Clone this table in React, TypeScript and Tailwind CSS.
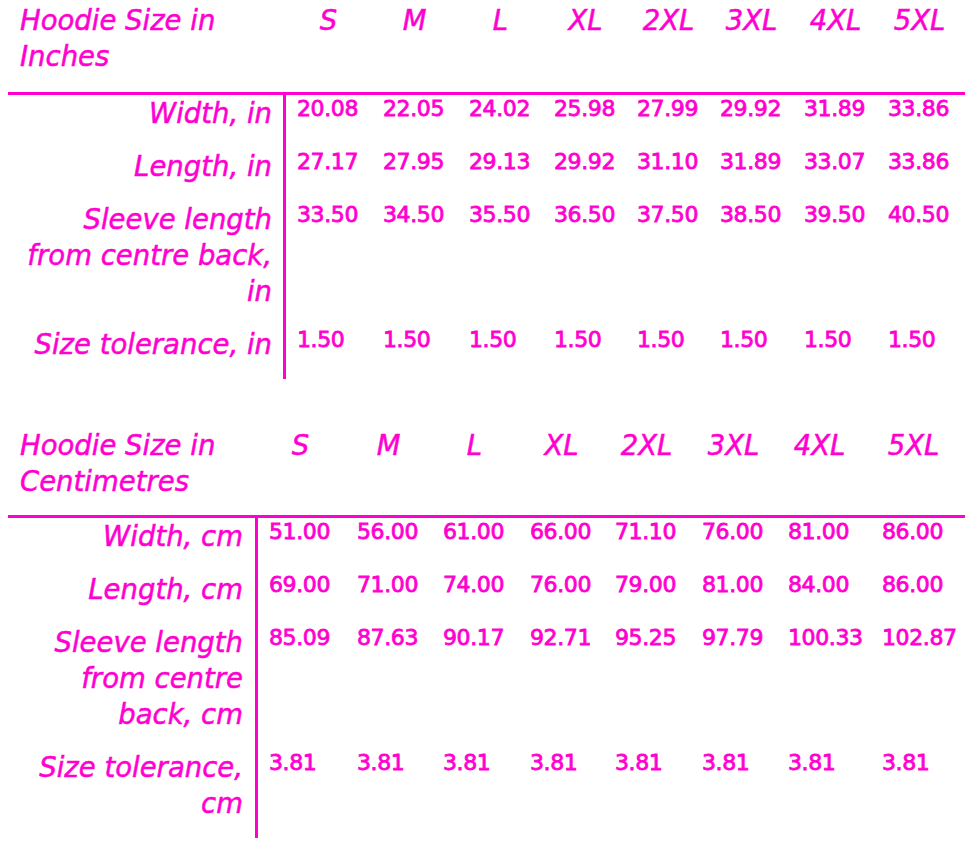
import React from "react";

type Row = { label: string[]; values: string[] };

const SIZES = ["S", "M", "L", "XL", "2XL", "3XL", "4XL", "5XL"];

function SizeTable({
  gridClass,
  labelPad,
  title,
  rows,
  headerPb,
}: {
  gridClass: string;
  labelPad: string;
  title: string[];
  rows: Row[];
  headerPb: string;
}) {
  return (
    <div className="ml-[8px] w-[957px]">
      <div className={`grid ${gridClass} border-b-[3px] border-[#ff00d0]`}>
        <div className={`pl-[12px] pt-[2px] ${headerPb} italic text-[27.5px] leading-[36px] [-webkit-text-stroke:0.5px_#ff00d0]`}>
          {title.map((t, i) => (
            <div key={i} className="whitespace-nowrap">
              {t}
            </div>
          ))}
        </div>
        {SIZES.map((s) => (
          <div key={s} className="pl-[11px] pt-[2px]">
            <div className="w-[63px] text-center italic text-[27.5px] leading-[36px] whitespace-nowrap [-webkit-text-stroke:0.5px_#ff00d0]">
              {s}
            </div>
          </div>
        ))}
      </div>
      {rows.map((r, ri) => (
        <div key={ri} className={`grid ${gridClass}`}>
          <div
            className={`border-r-[3px] border-[#ff00d0] ${labelPad} pb-[17px] text-right italic text-[27.5px] leading-[36px] [-webkit-text-stroke:0.5px_#ff00d0]`}
          >
            {r.label.map((l, i) => (
              <div key={i} className="whitespace-nowrap">
                {l}
              </div>
            ))}
          </div>
          {r.values.map((v, vi) => (
            <div
              key={vi}
              className="pl-[11px] text-[22px] leading-[28px] whitespace-nowrap tracking-[-0.4px] [-webkit-text-stroke:0.8px_#ff00d0]"
            >
              {v}
            </div>
          ))}
        </div>
      ))}
    </div>
  );
}

export default function App() {
  const inches: Row[] = [
    { label: ["Width, in"], values: ["20.08", "22.05", "24.02", "25.98", "27.99", "29.92", "31.89", "33.86"] },
    { label: ["Length, in"], values: ["27.17", "27.95", "29.13", "29.92", "31.10", "31.89", "33.07", "33.86"] },
    {
      label: ["Sleeve length", "from centre back,", "in"],
      values: ["33.50", "34.50", "35.50", "36.50", "37.50", "38.50", "39.50", "40.50"],
    },
    { label: ["Size tolerance, in"], values: ["1.50", "1.50", "1.50", "1.50", "1.50", "1.50", "1.50", "1.50"] },
  ];
  const cms: Row[] = [
    { label: ["Width, cm"], values: ["51.00", "56.00", "61.00", "66.00", "71.10", "76.00", "81.00", "86.00"] },
    { label: ["Length, cm"], values: ["69.00", "71.00", "74.00", "76.00", "79.00", "81.00", "84.00", "86.00"] },
    {
      label: ["Sleeve length", "from centre", "back, cm"],
      values: ["85.09", "87.63", "90.17", "92.71", "95.25", "97.79", "100.33", "102.87"],
    },
    { label: ["Size tolerance,", "cm"], values: ["3.81", "3.81", "3.81", "3.81", "3.81", "3.81", "3.81", "3.81"] },
  ];
  return (
    <div className="w-[980px] min-h-[842px] bg-white text-[#ff00d0] font-['DejaVu_Sans',sans-serif]">
      <SizeTable
        gridClass="grid-cols-[278px_86px_86px_85px_83px_83px_84px_84px_88px]"
        labelPad="pr-[11px]"
        title={["Hoodie Size in", "Inches"]}
        rows={inches}
        headerPb="pb-[18px]"
      />
      <div className="h-[46px]" />
      <SizeTable
        gridClass="grid-cols-[250px_88px_86px_87px_85px_87px_86px_94px_94px]"
        labelPad="pr-[12px]"
        title={["Hoodie Size in", "Centimetres"]}
        rows={cms}
        headerPb="pb-[16px]"
      />
    </div>
  );
}
